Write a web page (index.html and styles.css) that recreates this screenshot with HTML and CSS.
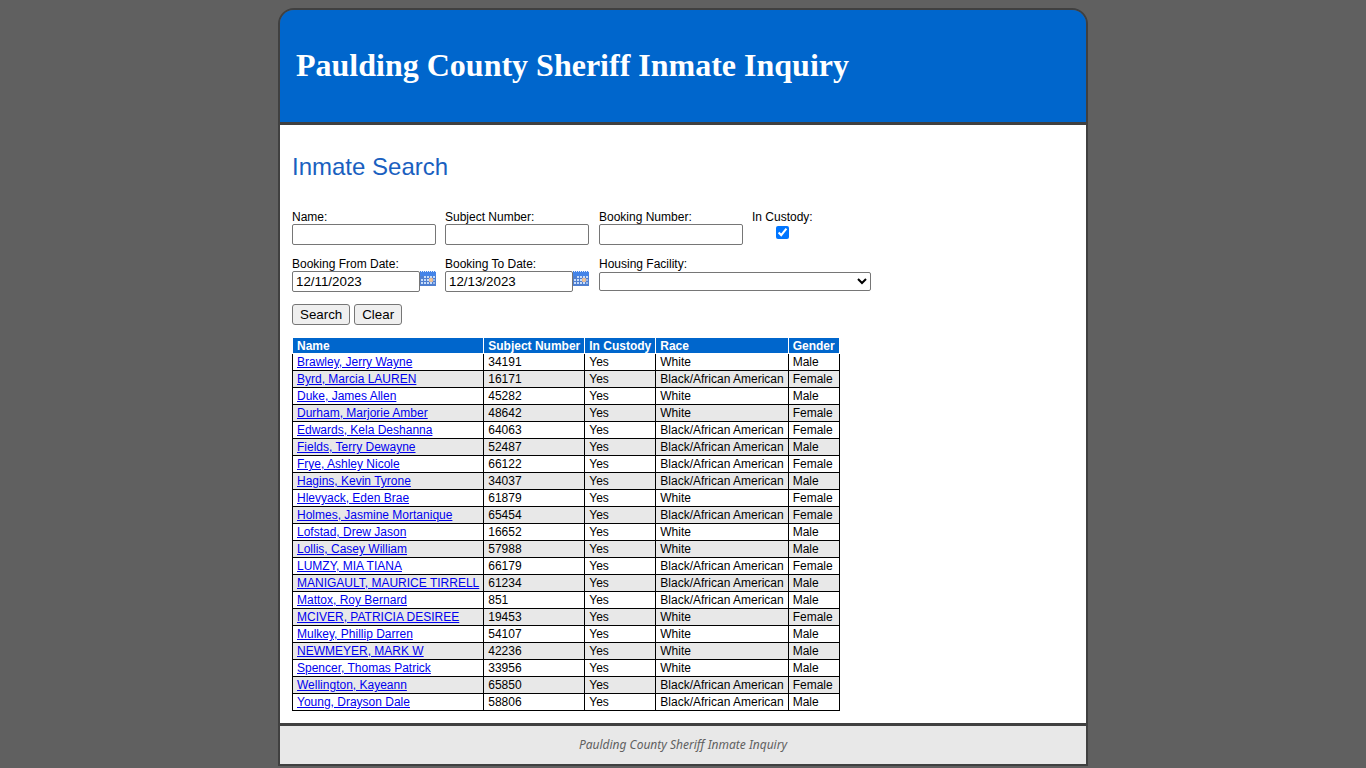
FILE: index.html
```
<!DOCTYPE html>
<html lang="en">
<head>
    <meta charset="UTF-8">
    <meta name="viewport" content="width=device-width, initial-scale=1.0">
    <title>Paulding County Sheriff Inmate Inquiry</title>
    <link rel="stylesheet" href="styles.css">
</head>
<body>
    <svg class="sprite" aria-hidden="true">
        <symbol id="calendar" viewBox="0 0 16 16">
            <rect width="16" height="15" fill="#4f7fd0"/>
            <rect width="16" height="5" fill="#4484e8"/>
            <path d="M1 0h1v1h-1zM3 0h1v1h-1zM5 0h1v1h-1zM7 0h1v1h-1zM9 0h1v1h-1zM11 0h1v1h-1zM13 0h1v1h-1zM15 0h1v1h-1z" fill="#e4eefc"/>
            <path d="M4 5h2v2h-2zM7 5h2v2h-2zM10 5h2v2h-2zM13 5h2v2h-2zM1 8h2v2h-2zM4 8h2v2h-2zM7 8h2v2h-2zM1 11h2v2h-2zM4 11h2v2h-2zM7 11h2v2h-2zM10 11h2v2h-2z" fill="#c6dcfa"/>
            <path d="M13 8h2v2h-2zM13 11h2v2h-2z" fill="#98b8ec"/>
            <rect x="9" y="7" width="4" height="4" fill="#d8b49c"/>
            <rect x="10" y="8" width="2" height="2" fill="#f4c890"/>
        </symbol>
    </svg>

    <div class="page">
        <header class="header">
            <h1>Paulding County Sheriff Inmate Inquiry</h1>
        </header>

        <main class="main">
            <h2>Inmate Search</h2>

            <form>
                <div class="fields">
                    <div class="field">
                        <label for="name">Name:</label>
                        <input type="text" id="name">
                    </div>
                    <div class="field">
                        <label for="subjectNumber">Subject Number:</label>
                        <input type="text" id="subjectNumber">
                    </div>
                    <div class="field">
                        <label for="bookingNumber">Booking Number:</label>
                        <input type="text" id="bookingNumber">
                    </div>
                    <div class="field custody">
                        <label for="inCustody">In Custody:</label>
                        <input type="checkbox" id="inCustody" checked>
                    </div>
                    <div class="field">
                        <label for="fromDate">Booking From Date:</label>
                        <div class="date">
                            <input type="text" id="fromDate" value="12/11/2023">
                            <button type="button" class="picker" aria-label="Choose from date"><svg><use href="#calendar"/></svg></button>
                        </div>
                    </div>
                    <div class="field">
                        <label for="toDate">Booking To Date:</label>
                        <div class="date">
                            <input type="text" id="toDate" value="12/13/2023">
                            <button type="button" class="picker" aria-label="Choose to date"><svg><use href="#calendar"/></svg></button>
                        </div>
                    </div>
                    <div class="field facility">
                        <label for="facility">Housing Facility:</label>
                        <select id="facility">
                            <option></option>
                        </select>
                    </div>
                </div>

                <div class="buttons">
                    <button type="button">Search</button>
                    <button type="button">Clear</button>
                </div>
            </form>

            <table class="results">
                <thead>
                    <tr><th>Name</th><th>Subject Number</th><th>In Custody</th><th>Race</th><th>Gender</th></tr>
                </thead>
                <tbody>
                    <tr><td><a href="#">Brawley, Jerry Wayne</a></td><td>34191</td><td>Yes</td><td>White</td><td>Male</td></tr>
                    <tr><td><a href="#">Byrd, Marcia LAUREN</a></td><td>16171</td><td>Yes</td><td>Black/African American</td><td>Female</td></tr>
                    <tr><td><a href="#">Duke, James Allen</a></td><td>45282</td><td>Yes</td><td>White</td><td>Male</td></tr>
                    <tr><td><a href="#">Durham, Marjorie Amber</a></td><td>48642</td><td>Yes</td><td>White</td><td>Female</td></tr>
                    <tr><td><a href="#">Edwards, Kela Deshanna</a></td><td>64063</td><td>Yes</td><td>Black/African American</td><td>Female</td></tr>
                    <tr><td><a href="#">Fields, Terry Dewayne</a></td><td>52487</td><td>Yes</td><td>Black/African American</td><td>Male</td></tr>
                    <tr><td><a href="#">Frye, Ashley Nicole</a></td><td>66122</td><td>Yes</td><td>Black/African American</td><td>Female</td></tr>
                    <tr><td><a href="#">Hagins, Kevin Tyrone</a></td><td>34037</td><td>Yes</td><td>Black/African American</td><td>Male</td></tr>
                    <tr><td><a href="#">Hlevyack, Eden Brae</a></td><td>61879</td><td>Yes</td><td>White</td><td>Female</td></tr>
                    <tr><td><a href="#">Holmes, Jasmine Mortanique</a></td><td>65454</td><td>Yes</td><td>Black/African American</td><td>Female</td></tr>
                    <tr><td><a href="#">Lofstad, Drew Jason</a></td><td>16652</td><td>Yes</td><td>White</td><td>Male</td></tr>
                    <tr><td><a href="#">Lollis, Casey William</a></td><td>57988</td><td>Yes</td><td>White</td><td>Male</td></tr>
                    <tr><td><a href="#">LUMZY, MIA TIANA</a></td><td>66179</td><td>Yes</td><td>Black/African American</td><td>Female</td></tr>
                    <tr><td><a href="#">MANIGAULT, MAURICE TIRRELL</a></td><td>61234</td><td>Yes</td><td>Black/African American</td><td>Male</td></tr>
                    <tr><td><a href="#">Mattox, Roy Bernard</a></td><td>851</td><td>Yes</td><td>Black/African American</td><td>Male</td></tr>
                    <tr><td><a href="#">MCIVER, PATRICIA DESIREE</a></td><td>19453</td><td>Yes</td><td>White</td><td>Female</td></tr>
                    <tr><td><a href="#">Mulkey, Phillip Darren</a></td><td>54107</td><td>Yes</td><td>White</td><td>Male</td></tr>
                    <tr><td><a href="#">NEWMEYER, MARK W</a></td><td>42236</td><td>Yes</td><td>White</td><td>Male</td></tr>
                    <tr><td><a href="#">Spencer, Thomas Patrick</a></td><td>33956</td><td>Yes</td><td>White</td><td>Male</td></tr>
                    <tr><td><a href="#">Wellington, Kayeann</a></td><td>65850</td><td>Yes</td><td>Black/African American</td><td>Female</td></tr>
                    <tr><td><a href="#">Young, Drayson Dale</a></td><td>58806</td><td>Yes</td><td>Black/African American</td><td>Male</td></tr>
                </tbody>
            </table>
        </main>

        <footer class="footer">Paulding County Sheriff Inmate Inquiry</footer>
    </div>
</body>
</html>
```

FILE: styles.css
```
* {
    box-sizing: border-box;
}
body {
    margin: 8px 8px 2px;
    background-color: #606060;
    font-family: Arial, "Liberation Sans", sans-serif;
    font-size: 12px;
    line-height: 14px;
    color: #000;
}
.sprite {
    display: none;
}
.page {
    max-width: 810px;
    margin: 0 auto;
    border: 2px solid #404040;
    border-radius: 16px 16px 0 0;
    overflow: hidden;
}
.header {
    padding: 36px 16px 38px;
    background-color: #0066cc;
    border-bottom: 3px solid #404040;
}
.header h1 {
    margin: 0;
    font-family: "Times New Roman", "Liberation Serif", serif;
    font-size: 32px;
    line-height: 38px;
    color: #fff;
}
.main {
    padding: 28px 12px 12px;
    background-color: #fff;
}
.main h2 {
    margin: 0 0 29px;
    font-size: 24px;
    font-weight: normal;
    line-height: 28px;
    color: #1a5fc0;
}
.fields {
    display: grid;
    grid-template-columns: 144px 145px 144px 144px;
    column-gap: 9px;
    row-gap: 12px;
}
.field {
    display: flex;
    flex-direction: column;
}
input,
select,
button {
    font-family: inherit;
}
input[type="text"] {
    width: 144px;
    height: 21px;
    padding: 1px 3px;
    border: 1px solid #767676;
    border-radius: 2px;
}
.custody {
    align-items: center;
    justify-self: start;
}
.custody input {
    width: 13px;
    height: 13px;
    margin: 2px 0 0;
}
.date {
    display: flex;
}
.date input[type="text"] {
    width: 128px;
}
.picker {
    flex: none;
    width: 16px;
    height: 16px;
    padding: 0;
    border: 0;
    background: none;
}
.picker svg {
    display: block;
    width: 16px;
    height: 16px;
}
.facility {
    grid-column: span 2;
}
.facility select {
    width: 272px;
    height: 19px;
    margin-top: 1px;
    background-color: #fff;
    border: 1px solid #767676;
    border-radius: 2px;
}
.buttons {
    display: flex;
    gap: 4px;
    margin: 12px 0;
}
.buttons button {
    height: 21px;
    padding: 1px 7px;
    border: 1px solid #767676;
    border-radius: 3px;
    background-color: #efefef;
}
.results {
    border-collapse: collapse;
}
.results th,
.results td {
    padding: 1px 4px;
    border: 1px solid #000;
    text-align: left;
    white-space: nowrap;
}
.results th {
    padding-bottom: 0;
    border-color: #fff;
    background-color: #0066cc;
    color: #fff;
}
.results tbody tr:first-child td {
    border-top-color: #fff;
}
.results tbody tr:nth-child(even) {
    background-color: #e8e8e8;
}
.results a {
    color: #0000ee;
}
.footer {
    padding: 12px;
    border-top: 3px solid #404040;
    background-color: #e8e8e8;
    font-family: "Trebuchet MS", "Noto Sans", sans-serif;
    font-style: italic;
    text-align: center;
    color: #606060;
}
```
